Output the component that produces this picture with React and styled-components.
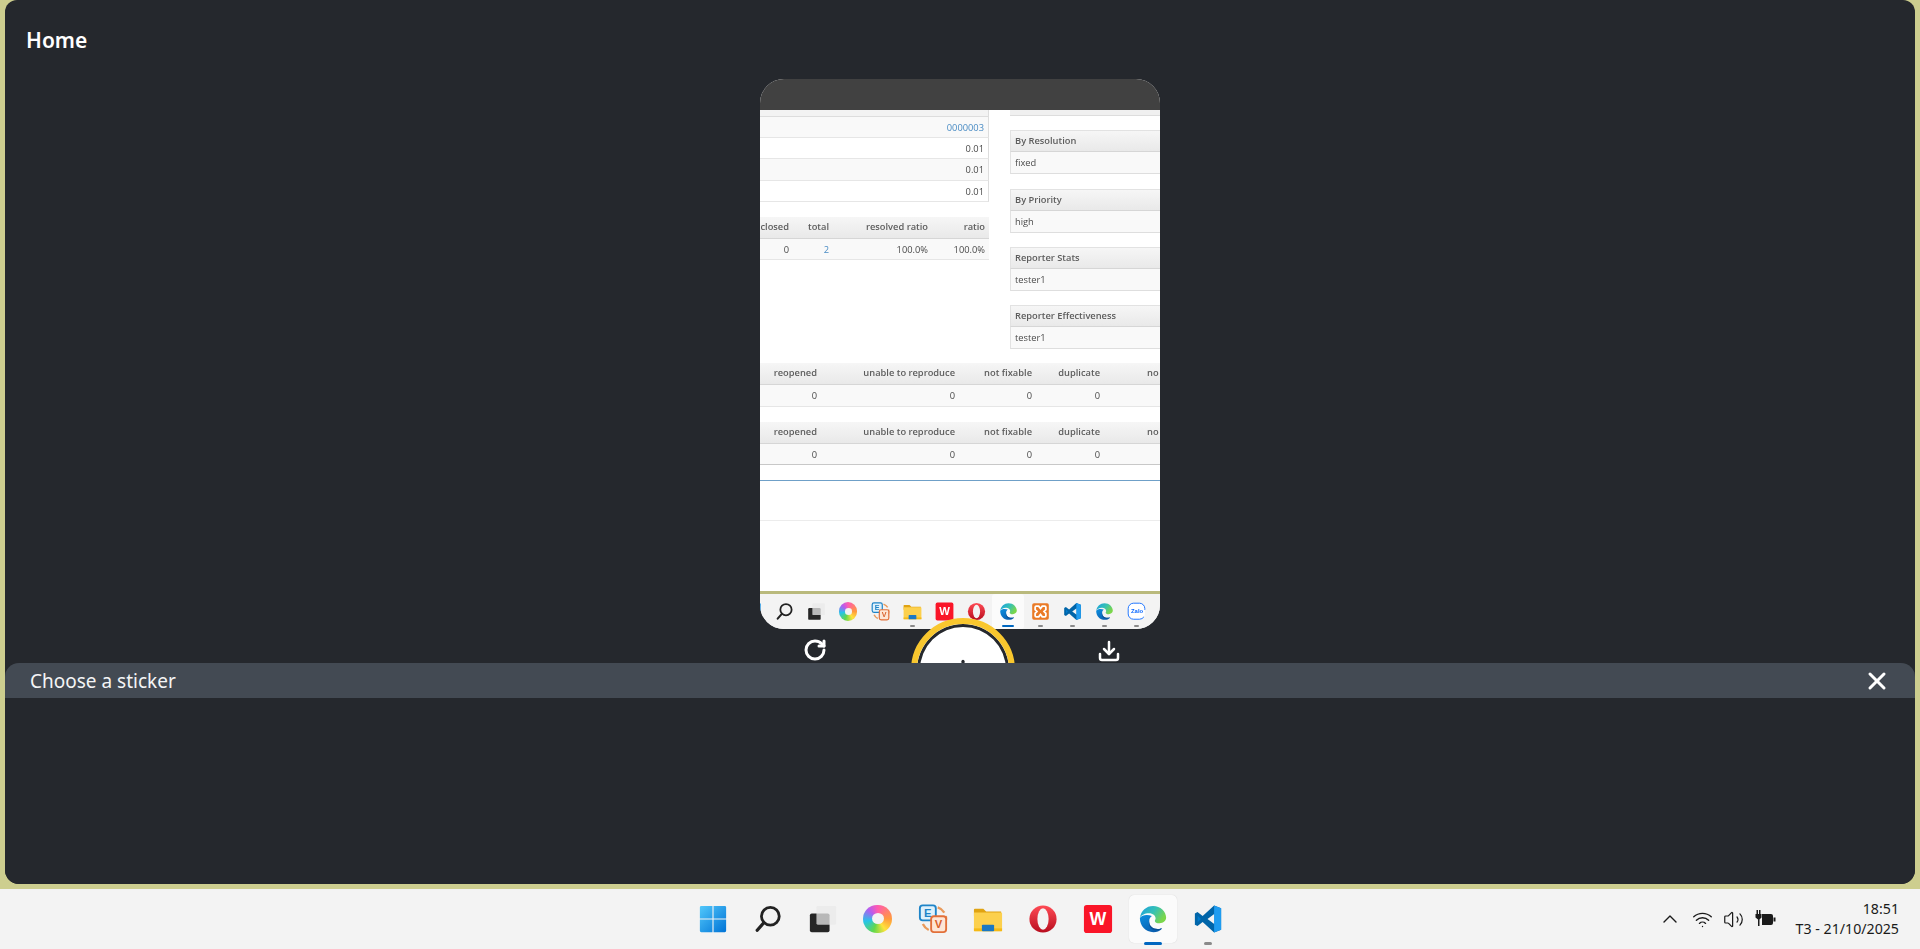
import React from 'react';
import styled, { createGlobalStyle } from 'styled-components';
import { RotateCw, Download, Plus, X, ChevronUp, Wifi, Volume2 } from 'lucide-react';

const Global = createGlobalStyle`
  html, body { margin: 0; height: 100%; overflow: hidden; }
  body { background: #cdce8f; font-family: "Noto Sans", "Open Sans", sans-serif; }
`;

const Page = styled.div`
  height: 949px;
  display: flex;
  flex-direction: column;
`;

const Shell = styled.main`
  position: relative;
  height: 884px;
  margin: 0 5px;
  background: #25282d;
  border-radius: 12px 12px 14px 14px;
  overflow: hidden;
  display: flex;
  flex-direction: column;
`;

const Title = styled.h1`
  margin: 0;
  height: 79px;
  padding: 25px 0 0 21px;
  box-sizing: border-box;
  font: 600 21px/30px "Noto Sans", sans-serif;
  color: #fff;
`;

const Stage = styled.div`
  display: flex;
  flex-direction: column;
  align-items: center;
`;

const Phone = styled.div`
  width: 400px;
  height: 550px;
  border-radius: 24px;
  overflow: hidden;
  background: #fff;
  display: flex;
  flex-direction: column;
`;

const PhoneTop = styled.div`
  height: 31px;
  flex: none;
  background: #414141;
`;

const Screen = styled.div`
  flex: 1;
  display: flex;
  flex-direction: column;
  font: 9.3px/21px "Open Sans", sans-serif;
  color: #4a4a4a;
  overflow: hidden;
  filter: blur(.25px);
`;

const Columns = styled.div`
  display: flex;
  height: 246px;
  flex: none;
`;

const LeftCol = styled.div`
  width: 229px;
  flex: none;
  display: flex;
  flex-direction: column;
`;

const RightCol = styled.div`
  flex: 1;
  margin-left: 21px;
  display: flex;
  flex-direction: column;
`;

const Stub = styled.div`
  height: 7px;
  flex: none;
  box-sizing: border-box;
  background: #f3f3f3;
  border-right: 1px solid #ddd;
  border-bottom: 1px solid #ddd;
`;

const ValueRow = styled.div`
  height: 21.2px;
  flex: none;
  box-sizing: border-box;
  text-align: right;
  padding-right: 4px;
  background: ${p => (p.$odd ? '#f9f9f9' : '#fff')};
  border-right: 1px solid #ddd;
  border-bottom: 1px solid #e6e6e6;
  color: ${p => (p.$link ? '#4a8cc4' : '#4a4a4a')};
`;

const HeadRow = styled.div`
  display: grid;
  grid-template-columns: ${p => p.$cols};
  height: 22.3px;
  flex: none;
  box-sizing: border-box;
  margin-top: ${p => p.$top || 0}px;
  background: linear-gradient(#f6f6f6, #e9e9e9);
  border-bottom: 1px solid #d6d6d6;
  font-weight: 600;
  line-height: 20px;
  color: #5c5c5c;
`;

const BodyRow = styled.div`
  display: grid;
  grid-template-columns: ${p => p.$cols};
  height: 21.4px;
  flex: none;
  box-sizing: border-box;
  background: #f9f9f9;
  border-bottom: 1px solid ${p => p.$line || '#e6e6e6'};
`;

const Cell = styled.span`
  text-align: ${p => (p.$open ? 'left' : 'right')};
  padding-left: ${p => (p.$open ? '47px' : '0')};
  white-space: nowrap;
  color: ${p => (p.$link ? '#4a8cc4' : 'inherit')};
`;

const PanelStub = styled.div`
  height: 6px;
  flex: none;
  box-sizing: border-box;
  background: #f0f0f0;
  border-bottom: 1px solid #ddd;
`;

const PanelHead = styled.div`
  height: 22px;
  flex: none;
  margin-top: ${p => p.$top}px;
  padding-left: 4px;
  background: linear-gradient(#f6f6f6, #e9e9e9);
  border-top: 1px solid #e2e2e2;
  border-left: 1px solid #e2e2e2;
  border-bottom: 1px solid #d6d6d6;
  box-sizing: border-box;
  font-weight: 600;
  line-height: 20px;
  color: #5c5c5c;
`;

const PanelBody = styled.div`
  height: 22px;
  flex: none;
  padding-left: 4px;
  background: #f9f9f9;
  border-left: 1px solid #e2e2e2;
  border-bottom: 1px solid #dedede;
  box-sizing: border-box;
`;

const Wide = styled.div`
  display: flex;
  flex-direction: column;
  flex: none;
  margin-top: ${p => p.$top}px;
`;

const BlueRule = styled.div`
  height: 1px;
  flex: none;
  margin-top: 15px;
  background: #6fa0c8;
`;

const GreyRule = styled.div`
  height: 1px;
  flex: none;
  margin-top: 39px;
  background: #ececec;
`;

const OliveLine = styled.div`
  height: 3px;
  flex: none;
  margin-top: auto;
  background: #b9b97c;
`;

const MiniBar = styled.div`
  height: 35px;
  flex: none;
  background: #f3f3f3;
  display: flex;
  align-items: center;
  & > :first-child { margin-left: -24px; }
`;

const MiniSlot = styled.div`
  position: relative;
  width: 32px;
  height: 35px;
  flex: none;
  display: flex;
  align-items: center;
  justify-content: center;
  border-radius: 3px;
  background: ${p => (p.$active ? '#fbfbfb' : 'transparent')};
`;

const MiniDot = styled.i`
  position: absolute;
  bottom: 2px;
  left: 50%;
  width: ${p => (p.$active ? 12 : 5)}px;
  height: 2px;
  margin-left: ${p => (p.$active ? -6 : -2.5)}px;
  border-radius: 1px;
  background: ${p => (p.$active ? '#0067c0' : '#8a8a8a')};
`;

const Controls = styled.div`
  position: relative;
  width: 400px;
  box-sizing: border-box;
  padding-left: 43px;
  margin-top: -11px;
  display: flex;
  gap: 85px;
  align-items: flex-start;
  color: #fff;
`;

const IconButton = styled.button`
  flex: none;
  width: 24px;
  height: 24px;
  margin-top: 20px;
  padding: 0;
  border: 0;
  background: none;
  color: #fff;
  display: flex;
`;

const Capture = styled.button`
  flex: none;
  width: 104px;
  height: 104px;
  padding: 0;
  margin: 0 -3px 0 -1px;
  border: 6px solid #f9c72e;
  border-radius: 50%;
  background: #fff;
  box-shadow: inset 0 0 0 3px #25282d;
  color: #25282d;
  display: flex;
  align-items: center;
  justify-content: center;
`;

const Sheet = styled.section`
  position: absolute;
  left: 0;
  right: 0;
  bottom: 0;
  height: 221px;
  background: #25282d;
  border-radius: 14px 14px 0 0;
`;

const SheetHead = styled.header`
  height: 35px;
  padding: 0 24px 0 25px;
  display: flex;
  align-items: center;
  justify-content: space-between;
  background: #434a53;
  border-radius: 14px 14px 0 0;
  font-size: 19px;
  color: #f4f5f6;
`;

const Taskbar = styled.footer`
  height: 60px;
  margin-top: 5px;
  background: #f3f3f3;
  display: flex;
  align-items: center;
  padding-left: 685px;
  padding-right: 21px;
`;

const Slot = styled.div`
  position: relative;
  width: 55px;
  height: 60px;
  flex: none;
  display: flex;
  align-items: center;
  justify-content: center;
`;

const Tile = styled.div`
  position: absolute;
  top: 6px;
  left: 3.5px;
  width: 48px;
  height: 48px;
  border-radius: 5px;
  background: #fbfbfb;
  box-shadow: 0 0 1px rgba(0, 0, 0, .18);
`;

const SlotIcon = styled.div`
  position: relative;
  display: flex;
`;

const Pip = styled.i`
  position: absolute;
  bottom: 4px;
  left: 50%;
  width: ${p => (p.$active ? 18 : 8)}px;
  height: 3px;
  margin-left: ${p => (p.$active ? -9 : -4)}px;
  border-radius: 2px;
  background: ${p => (p.$active ? '#0067c0' : '#8a8a8a')};
`;

const Tray = styled.div`
  margin-left: auto;
  display: flex;
  align-items: center;
  color: #1a1a1a;
`;

const TrayIcons = styled.div`
  display: flex;
  align-items: center;
  gap: 10px;
  margin-right: 20px;
`;

const Clock = styled.div`
  text-align: right;
  font: 14.2px/20px "Noto Sans", sans-serif;
  color: #1a1a1a;
`;

const Ring = styled.div`
  position: relative;
  width: ${p => p.$size * 0.96}px;
  height: ${p => p.$size * 0.96}px;
  border-radius: 50%;
  background: conic-gradient(#ff5bb0, #ff9a3c 25%, #ffe23c 40%, #63d84a 55%, #25c4e8 72%, #b45cf0 88%, #ff5bb0);
  &::after {
    content: "";
    position: absolute;
    inset: 30% 26% 32% 32%;
    border-radius: 50%;
    background: #f3f3f3;
  }
`;

const WinIcon = ({ s }) => (
  <svg width={s} height={s} viewBox="0 0 32 32">
    <defs>
      <linearGradient id="win" x1="0" y1="0" x2="1" y2="1">
        <stop offset="0" stopColor="#52c8fb" />
        <stop offset="1" stopColor="#0073d6" />
      </linearGradient>
    </defs>
    <path fill="url(#win)" d="M2 3.5A1.5 1.5 0 0 1 3.500 2H15.400V15.400H2zM16.600 2H28.500A1.500 1.500 0 0 1 30 3.500V15.400H16.600zM2 16.600H15.400V30H3.500A1.500 1.500 0 0 1 2 28.500zM16.600 16.600H30V28.500A1.500 1.500 0 0 1 28.500 30H16.600z" />
  </svg>
);

const SearchIcon = ({ s }) => (
  <svg width={s} height={s} viewBox="0 0 32 32" fill="none" stroke="#222" strokeLinecap="round">
    <circle cx="18.500" cy="13" r="9.500" strokeWidth="3" />
    <path d="M11.500 20 4.500 28" strokeWidth="3.500" />
  </svg>
);

const TaskIcon = ({ s }) => (
  <svg width={s} height={s} viewBox="0 0 32 32">
    <rect x="2" y="10" width="21" height="20" rx="2" fill="#262626" />
    <rect x="9" y="2" width="21" height="20" rx="1.500" fill="#e9e9e9" opacity=".75" />
  </svg>
);

const EvIcon = ({ s }) => (
  <svg width={s} height={s} viewBox="0 0 32 32">
    <circle cx="17" cy="16" r="13" fill="none" stroke="#e99a5b" strokeWidth="2.500" strokeDasharray="9 4" />
    <rect x="2" y="1.500" width="17" height="16" rx="3" fill="#dff1fb" stroke="#1e84c8" strokeWidth="2" />
    <text x="10.500" y="14" textAnchor="middle" fontSize="12" fontWeight="700" fontFamily="Liberation Sans, sans-serif" fill="#1e84c8">E</text>
    <rect x="14" y="13" width="16" height="17" rx="3" fill="#fde6d6" stroke="#e2703a" strokeWidth="2" />
    <text x="22" y="26" textAnchor="middle" fontSize="12" fontWeight="700" fontFamily="Liberation Sans, sans-serif" fill="#d8602a">V</text>
  </svg>
);

const FolderIcon = ({ s }) => (
  <svg width={s} height={s} viewBox="0 0 32 32">
    <path fill="#e0a312" d="M1 6a1 1 0 0 1 1-1h9l3 3h16v5H1z" />
    <path fill="#fcd04d" d="M1 9h29a1 1 0 0 1 1 1v18a1 1 0 0 1-1 1H2a1 1 0 0 1-1-1z" />
    <rect x="1" y="26" width="30" height="3" fill="#f5b916" />
    <rect x="9.500" y="22" width="13" height="7" rx="1" fill="#1a78c4" />
  </svg>
);

const OperaIcon = ({ s }) => (
  <svg width={s} height={s} viewBox="0 0 32 32">
    <defs>
      <linearGradient id="opera" x1="0" y1="0" x2="0" y2="1">
        <stop offset="0" stopColor="#ff4b55" />
        <stop offset="1" stopColor="#b80d1e" />
      </linearGradient>
    </defs>
    <circle cx="16" cy="16" r="14.500" fill="url(#opera)" />
    <ellipse cx="16" cy="16" rx="6" ry="11.500" fill="#f3f3f3" />
  </svg>
);

const WpsIcon = ({ s }) => (
  <svg width={s} height={s} viewBox="0 0 32 32">
    <rect x="1" y="1" width="30" height="30" rx="3" fill="#fa1528" />
    <text x="16" y="22" textAnchor="middle" fontSize="19" fontWeight="700" fontFamily="Liberation Sans, sans-serif" fill="#fff">W</text>
  </svg>
);

const EdgeIcon = ({ s, id }) => (
  <svg width={s} height={s} viewBox="0 0 32 32">
    <defs>
      <linearGradient id={`${id}a`} x1="0" y1="0" x2="1" y2=".5">
        <stop offset="0" stopColor="#1b9de2" />
        <stop offset=".55" stopColor="#35c1b5" />
        <stop offset="1" stopColor="#7bd64a" />
      </linearGradient>
      <linearGradient id={`${id}b`} x1="0" y1="0" x2=".6" y2="1">
        <stop offset="0" stopColor="#0c8fe0" />
        <stop offset="1" stopColor="#0a5fb0" />
      </linearGradient>
    </defs>
    <path fill={`url(#${id}a)`} d="M2 15C3 7 9 2 16 2c8 0 14 6 14 12.500 0 3.500-3 6-7 6-3 0-5-1-5-2.500 0-.8.800-1.300.800-2.700 0-3-3-5.500-7-5.500C7 9.800 3 12 2 15z" />
    <path fill={`url(#${id}b)`} d="M2 15c0 8.500 6 15 14.500 15 3.500 0 6.500-1.200 8.500-3.200.5-.6 0-1.200-.7-.8-1 .4-2.200.7-3.500.7-5.500 0-9-3.500-9-8 0-2.700 1.200-4.700 3-6C10 11 4 11.500 2 15z" />
    <path fill="#0b4f94" d="M12 18.700c0 4.500 3.500 8 9 8 1.300 0 2.500-.3 3.500-.7.400-.2.700 0 .7.300-2.500 1.700-6 2.300-9 1.200C12.500 26 10.500 22 12.500 15c-.3 1-.5 2.300-.5 3.700z" />
  </svg>
);

const XamppIcon = ({ s }) => (
  <svg width={s} height={s} viewBox="0 0 32 32">
    <rect x="2" y="2" width="28" height="28" rx="3" fill="#ea7a26" />
    <path fill="none" stroke="#fff" strokeWidth="3" d="M9 7h4l3 4 3-4h4a2 2 0 0 1 2 2v4l-3 3 3 3v4a2 2 0 0 1-2 2h-4l-3-4-3 4H9a2 2 0 0 1-2-2v-4l3-3-3-3V9a2 2 0 0 1 2-2z" />
  </svg>
);

const CodeIcon = ({ s }) => (
  <svg width={s} height={s} viewBox="0 0 32 32">
    <path fill="#0065a9" d="M22.500 1.500 10.300 12.800 4.800 8.600 2 10v12l2.800 1.400 5.500-4.200 12.200 11.300L30 27.500v-23zM23 10.500v11L15.500 16z" />
    <path fill="#1f9cf0" d="M22.500 1.500 30 4.500v23l-7.500 3V21.500 10.500z" />
    <path fill="#007acc" d="M5 12.500 8.500 16 5 19.500z" />
  </svg>
);

const ZaloIcon = ({ s }) => (
  <svg width={s} height={s} viewBox="0 0 32 32">
    <rect x="2" y="2" width="28" height="27" rx="9" fill="#fff" stroke="#0a68ff" strokeWidth="1.500" strokeDasharray="26 12 60" />
    <text x="17" y="19" textAnchor="middle" fontSize="10" fontWeight="700" fontFamily="Liberation Sans, sans-serif" fill="#0a68ff">Zalo</text>
  </svg>
);

const BatteryIcon = () => (
  <svg width="22" height="20" viewBox="0 0 22 20" fill="#1a1a1a">
    <rect x="2.500" y="1" width="1.500" height="4" />
    <rect x="5" y="1" width="1.500" height="4" />
    <path d="M1.500 5h6v3.500l-2 2V17H4v-6.500l-2.500-2z" />
    <path d="M8 5h9a2 2 0 0 1 2 2v7a2 2 0 0 1-2 2H8z" />
    <rect x="19.500" y="8.500" width="2" height="4" />
  </svg>
);

const headCols = '29px 40px 99px 57px';
const wideCols = '57px 138px 77px 68px 1fr';

const panels = [
  { top: 14, head: 'By Resolution', body: 'fixed' },
  { top: 15, head: 'By Priority', body: 'high' },
  { top: 14, head: 'Reporter Stats', body: 'tester1' },
  { top: 14, head: 'Reporter Effectiveness', body: 'tester1' },
];

const wideHead = ['reopened', 'unable to reproduce', 'not fixable', 'duplicate'];

function WideTable({ top, line }) {
  return (
    <Wide $top={top}>
      <HeadRow $cols={wideCols}>
        {wideHead.map(h => <Cell key={h}>{h}</Cell>)}
        <Cell $open>no</Cell>
      </HeadRow>
      <BodyRow $cols={wideCols} $line={line}>
        <Cell>0</Cell><Cell>0</Cell><Cell>0</Cell><Cell>0</Cell>
      </BodyRow>
    </Wide>
  );
}

const miniApps = [
  [WinIcon], [SearchIcon], [TaskIcon], [Ring], [EvIcon], [FolderIcon, 'dot'], [WpsIcon], [OperaIcon],
  [EdgeIcon, 'active', 'me1'], [XamppIcon, 'dot'], [CodeIcon, 'dot'], [EdgeIcon, 'dot', 'me2'], [ZaloIcon, 'dot'],
];

const mainApps = [
  [WinIcon], [SearchIcon], [TaskIcon], [Ring], [EvIcon], [FolderIcon], [OperaIcon], [WpsIcon],
  [EdgeIcon, 'active', 'te1'], [CodeIcon, 'dot'],
];

function AppIcon({ Icon, size, id }) {
  if (Icon === Ring) return <Ring $size={size} />;
  return <Icon s={size} id={id} />;
}

export default function App() {
  return (
    <Page>
      <Global />
      <Shell>
        <Title>Home</Title>
        <Stage>
          <Phone>
            <PhoneTop />
            <Screen>
              <Columns>
                <LeftCol>
                  <Stub />
                  <ValueRow $odd $link>0000003</ValueRow>
                  <ValueRow>0.01</ValueRow>
                  <ValueRow $odd>0.01</ValueRow>
                  <ValueRow>0.01</ValueRow>
                  <HeadRow $cols={headCols} $top={15}>
                    <Cell>closed</Cell><Cell>total</Cell><Cell>resolved ratio</Cell><Cell>ratio</Cell>
                  </HeadRow>
                  <BodyRow $cols={headCols}>
                    <Cell>0</Cell><Cell $link>2</Cell><Cell>100.0%</Cell><Cell>100.0%</Cell>
                  </BodyRow>
                </LeftCol>
                <RightCol>
                  <PanelStub />
                  {panels.map(p => (
                    <React.Fragment key={p.head}>
                      <PanelHead $top={p.top}>{p.head}</PanelHead>
                      <PanelBody>{p.body}</PanelBody>
                    </React.Fragment>
                  ))}
                </RightCol>
              </Columns>
              <WideTable top={7} />
              <WideTable top={15} line="#c8c8c8" />
              <BlueRule />
              <GreyRule />
              <OliveLine />
              <MiniBar>
                {miniApps.map(([Icon, mark, id], i) => (
                  <MiniSlot key={i} $active={mark === 'active'}>
                    <AppIcon Icon={Icon} size={19} id={id} />
                    {mark && <MiniDot $active={mark === 'active'} />}
                  </MiniSlot>
                ))}
              </MiniBar>
            </Screen>
          </Phone>
          <Controls>
            <IconButton><RotateCw size={24} strokeWidth={3} /></IconButton>
            <Capture><Plus size={30} strokeWidth={2.5} /></Capture>
            <IconButton><Download size={26} strokeWidth={2.5} /></IconButton>
          </Controls>
        </Stage>
        <Sheet>
          <SheetHead>
            Choose a sticker
            <X size={28} strokeWidth={2.6} color="#fff" />
          </SheetHead>
        </Sheet>
      </Shell>
      <Taskbar>
        {mainApps.map(([Icon, mark, id], i) => (
          <Slot key={i}>
            {mark === 'active' && <Tile />}
            <SlotIcon>
              <AppIcon Icon={Icon} size={30} id={id} />
            </SlotIcon>
            {mark && <Pip $active={mark === 'active'} />}
          </Slot>
        ))}
        <Tray>
          <TrayIcons>
            <ChevronUp size={24} strokeWidth={1.4} />
            <Wifi size={21} strokeWidth={1.6} />
            <Volume2 size={21} strokeWidth={1.4} />
            <BatteryIcon />
          </TrayIcons>
          <Clock>18:51<br />T3 - 21/10/2025</Clock>
        </Tray>
      </Taskbar>
    </Page>
  );
}
